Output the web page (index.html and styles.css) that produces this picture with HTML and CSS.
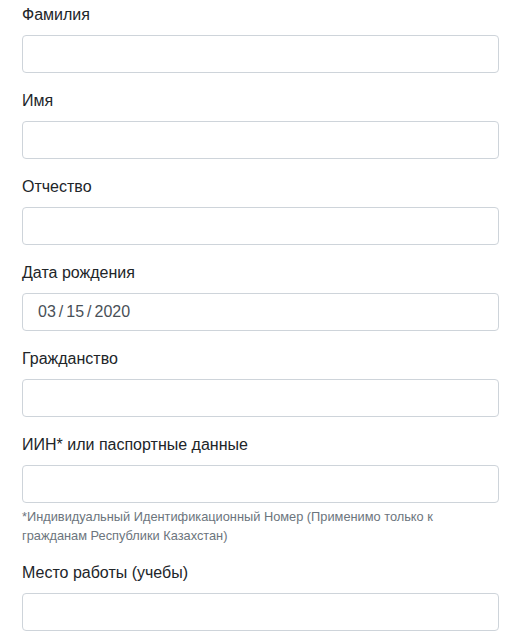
FILE: index.html
```html
<!DOCTYPE html>
<html lang="ru">
<head>
<meta charset="utf-8">
<link rel="stylesheet" href="styles.css">
</head>
<body>
<form class="form">
  <div class="group">
    <label class="label">Фамилия</label>
    <input class="control" type="text">
  </div>
  <div class="group">
    <label class="label">Имя</label>
    <input class="control" type="text">
  </div>
  <div class="group">
    <label class="label">Отчество</label>
    <input class="control" type="text">
  </div>
  <div class="group">
    <label class="label">Дата рождения</label>
    <div class="control date"><span>03</span><span class="sep">/</span><span>15</span><span class="sep">/</span><span>2020</span></div>
  </div>
  <div class="group">
    <label class="label">Гражданство</label>
    <input class="control" type="text">
  </div>
  <div class="group">
    <label class="label">ИИН* или паспортные данные</label>
    <input class="control" type="text">
    <small class="hint">*Индивидуальный Идентификационный Номер (Применимо только к гражданам Республики Казахстан)</small>
  </div>
  <div class="group">
    <label class="label">Место работы (учебы)</label>
    <input class="control" type="text">
  </div>
</form>
</body>
</html>
```
FILE: styles.css
```css
html, body {
  margin: 0;
  padding: 0;
  background: #fff;
}
body {
  font-family: "Liberation Sans", Arial, sans-serif;
  font-size: 16px;
  line-height: 1.5;
  color: #212529;
}
.form {
  padding: 3px 10px 0 22px;
}
.group {
  display: flex;
  flex-direction: column;
  margin-bottom: 16px;
}
.label {
  display: block;
  margin-bottom: 8px;
}
.control {
  box-sizing: border-box;
  width: 100%;
  height: 38px;
  padding: 6px 12px;
  font: inherit;
  color: #495057;
  background: #fff;
  border: 1px solid #ced4da;
  border-radius: 4px;
  outline: none;
}
.date {
  display: flex;
  align-items: center;
  padding-left: 15px;
}
.sep {
  margin: 0 3px;
}
.hint {
  display: block;
  margin-top: 4px;
  font-size: 12.8px;
  line-height: 1.5;
  color: #6c757d;
}
```
